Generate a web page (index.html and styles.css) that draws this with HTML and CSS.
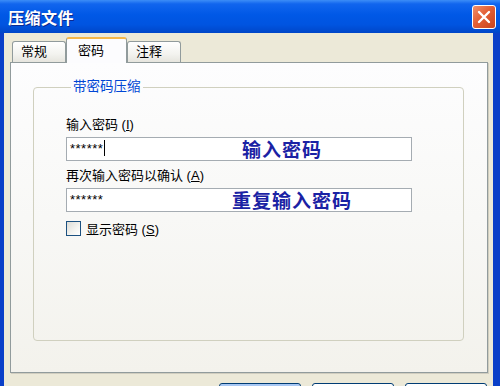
FILE: index.html
```html
<!DOCTYPE html>
<html lang="zh-CN">

<head>
  <meta charset="UTF-8">
  <meta name="viewport" content="width=device-width, initial-scale=1.0">
  <title>压缩文件</title>
  <link rel="stylesheet" href="styles.css">
</head>

<body>
  <div class="window">
    <div class="titlebar">
      <span class="title">压缩文件</span>
      <div class="close-btn">
        <svg width="14" height="14" viewBox="0 0 14 14">
          <path d="M2 2 L12 12 M12 2 L2 12" stroke="#fff" stroke-width="2.4" stroke-linecap="round"/>
        </svg>
      </div>
    </div>

    <div class="client">
      <div class="tabs">
        <div class="tab">常规</div>
        <div class="tab active">密码</div>
        <div class="tab">注释</div>
      </div>

      <div class="panel">
        <fieldset class="group">
          <legend>带密码压缩</legend>

          <div class="field-label">输入密码 (<u>I</u>)</div>
          <div class="field">
            <div class="textbox">******<span class="caret"></span></div>
            <span class="note note-first">输入密码</span>
          </div>

          <div class="field-label">再次输入密码以确认 (<u>A</u>)</div>
          <div class="field">
            <div class="textbox">******</div>
            <span class="note note-second">重复输入密码</span>
          </div>

          <label class="check">
            <span class="check-box"></span>
            <span>显示密码 (<u>S</u>)</span>
          </label>
        </fieldset>
      </div>

      <!-- buttons are cut off by the bottom edge, only their tops show -->
      <div class="buttons">
        <div class="btn default"></div>
        <div class="btn"></div>
        <div class="btn"></div>
      </div>
    </div>
  </div>
</body>

</html>
```

FILE: styles.css
```css
/* XP style dialog */
body {
  margin: 0;
  padding: 0;
  width: 500px;
  height: 386px;
  overflow: hidden;
  font-family: "Liberation Sans", "Noto Sans CJK SC", sans-serif;
  font-size: 13px;
  color: #000;
}

.window {
  width: 500px;
  height: 386px;
  background: #0a3fc8;
  display: flex;
  flex-direction: column;
}

.titlebar {
  height: 33px;
  flex-shrink: 0;
  display: flex;
  align-items: center;
  justify-content: space-between;
  padding: 0 4px 0 8px;
  background: linear-gradient(to bottom, #3c8df7 0%, #1165ee 12%, #0058e6 45%, #0054e0 75%, #0046c8 100%);
}

.title {
  color: #fff;
  font-weight: bold;
  font-size: 16px;
  letter-spacing: 0.5px;
  text-shadow: 1px 1px 0 #0a2a90;
}

.close-btn {
  width: 22px;
  height: 22px;
  border: 1px solid #fff;
  border-radius: 3px;
  background: linear-gradient(135deg, #f0906c 0%, #e35f35 45%, #c8441e 100%);
  display: flex;
  align-items: center;
  justify-content: center;
  margin-top: 1px;
}

.client {
  flex: 1;
  margin: 0 7px 0 4px;
  background: #ece9d8;
  padding: 8px 5px 0 6px;
  display: flex;
  flex-direction: column;
  overflow: hidden;
}

.tabs {
  display: flex;
  align-items: flex-end;
  height: 21px;
  padding-left: 2px;
  position: relative;
  z-index: 1;
  flex-shrink: 0;
}

.tab {
  height: 20px;
  line-height: 20px;
  padding: 0 0 0 8px;
  width: 44px;
  border: 1px solid #919b9c;
  border-bottom: none;
  border-radius: 3px 3px 0 0;
  background: linear-gradient(to bottom, #fff 0%, #f3f3ef 60%, #e6e5de 100%);
  font-size: 13px;
}

.tab.active {
  height: 24px;
  width: 48px;
  margin-bottom: -1px;
  padding-left: 11px;
  line-height: 24px;
  border-top: 2px solid #f6b84a;
  background: #fcfcfe;
}

.panel {
  height: 311px;
  box-sizing: border-box;
  flex-shrink: 0;
  border: 1px solid #919b9c;
  background: linear-gradient(to bottom, #fdfdfe 0%, #f8f8f6 50%, #f3f2ec 100%);
  padding: 15px 23px 0 22px;
  box-shadow: 1px 1px 0 #d0cdbf;
}

.group {
  margin: 0;
  height: 241px;
  border: 1px solid #d0d0bf;
  border-radius: 4px;
  padding: 20px 30px 0 32px;
}

.group legend {
  color: #0046d5;
  padding: 0 2px;
  margin-left: 5px;
  font-size: 13.5px;
  line-height: 18px;
}

.field-label {
  line-height: 18px;
  height: 18px;
}

.field-label + .field {
  margin-top: 3px;
}

.field {
  position: relative;
  margin-bottom: 6px;
}

.textbox {
  height: 22px;
  width: 341px;
  border: 1px solid #a5acb2;
  background: #fff;
  font-size: 13px;
  line-height: 22px;
  padding-left: 3px;
  letter-spacing: 0.5px;
  box-sizing: content-box;
}

.caret {
  display: inline-block;
  width: 1px;
  height: 16px;
  background: #000;
  vertical-align: -3px;
  margin-left: 1px;
}

/* annotations lying over the inputs */
.note {
  position: absolute;
  top: 0;
  color: #1a22a4;
  font-family: "Noto Sans CJK SC", sans-serif;
  font-weight: bold;
  font-size: 19px;
  line-height: 24px;
  letter-spacing: 1px;
}

.note-first {
  left: 176px;
}

.note-second {
  left: 166px;
}

.check {
  display: flex;
  align-items: center;
  gap: 5px;
  margin-top: 8px;
  height: 16px;
}

.check-box {
  width: 13px;
  height: 13px;
  border: 1px solid #1c5180;
  background: linear-gradient(135deg, #dcdcd7 0%, #f4f4f0 60%, #fff 100%);
}

.buttons {
  display: flex;
  justify-content: flex-end;
  gap: 11px;
  margin-top: 10px;
  padding-right: 1px;
  flex-shrink: 0;
}

.btn {
  width: 80px;
  height: 23px;
  border: 1px solid #003c74;
  border-radius: 3px;
  background: linear-gradient(to bottom, #fff 0%, #f0f0ea 80%, #d6d0c5 100%);
  flex-shrink: 0;
}

.btn.default {
  box-shadow: inset 0 0 0 2px #a8c8f4;
}
```
